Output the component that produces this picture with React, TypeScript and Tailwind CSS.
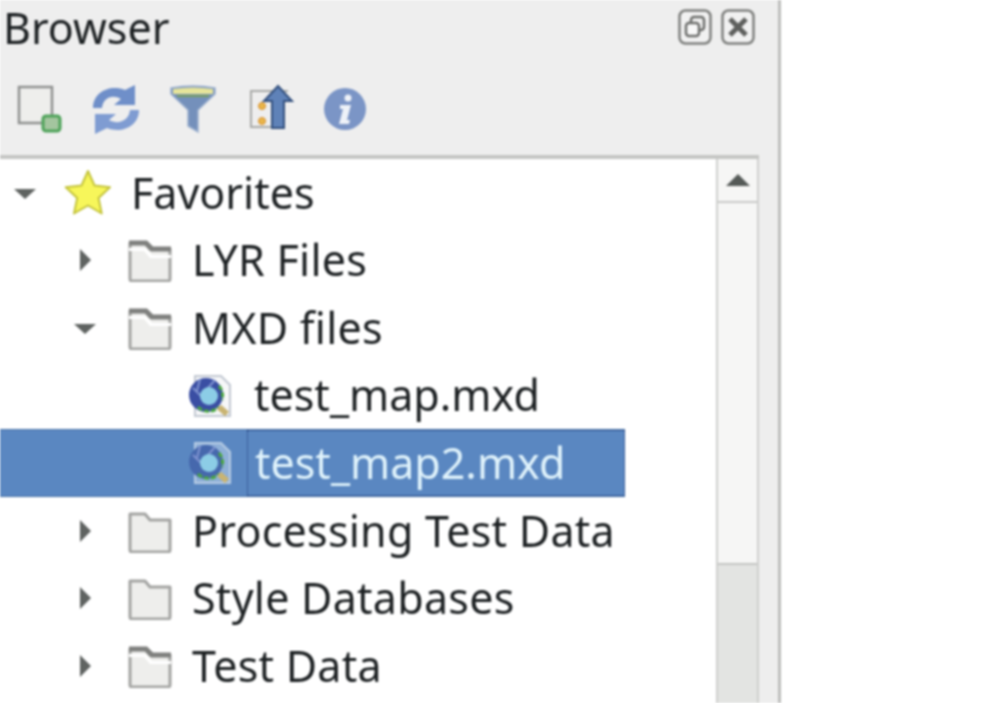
import type { ReactNode } from "react";

type Row = {
  label: string;
  level: number;
  arrow?: "open" | "closed";
  icon: "star" | "folder" | "linked" | "mxd";
  selected?: boolean;
};

const rows: Row[] = [
  { label: "Favorites", level: 0, arrow: "open", icon: "star" },
  { label: "LYR Files", level: 1, arrow: "closed", icon: "linked" },
  { label: "MXD files", level: 1, arrow: "open", icon: "linked" },
  { label: "test_map.mxd", level: 2, icon: "mxd" },
  { label: "test_map2.mxd", level: 2, icon: "mxd", selected: true },
  { label: "Processing Test Data", level: 1, arrow: "closed", icon: "folder" },
  { label: "Style Databases", level: 1, arrow: "closed", icon: "folder" },
  { label: "Test Data", level: 1, arrow: "closed", icon: "linked" },
];

function Arrow({ dir }: { dir?: "open" | "closed" }) {
  if (!dir) return <span className="w-[24px] shrink-0" />;
  return (
    <svg viewBox="0 0 24 24" className="h-[24px] w-[24px] shrink-0">
      {dir === "open" ? (
        <path d="M1 8h22L12 18z" fill="#5f6361" />
      ) : (
        <path d="M7 1l11 11L7 23z" fill="#5f6361" />
      )}
    </svg>
  );
}

function FolderIcon({ linked }: { linked: boolean }) {
  return (
    <svg viewBox="0 0 44 44" className="h-[44px] w-[44px] shrink-0">
      <path
        d="M2 5h15l5 6h20v30a2 2 0 0 1-2 2H4a2 2 0 0 1-2-2z"
        fill="#eeeeec"
        stroke="#a3a4a2"
        strokeWidth="3"
        strokeLinejoin="round"
      />
      {linked && <path d="M1 10h17l6 7h19v3H22l-6-7H1z" fill="#fff" />}
      {linked && <path d="M1 5h17l6 6h19" fill="none" stroke="#7f807e" strokeWidth="5" />}
    </svg>
  );
}

function MxdIcon({ selected }: { selected?: boolean }) {
  return (
    <svg viewBox="0 0 44 44" className="h-[44px] w-[44px] shrink-0">
      <path
        d="M7 2h26l9 9v31H7z"
        fill={selected ? "#8fb0d8" : "#f6f7f8"}
        stroke={selected ? "#b6cbe4" : "#c2c8d2"}
        strokeWidth="2"
      />
      <circle cx="18" cy="21" r="17" fill={selected ? "#4668ad" : "#3a4ea3"} />
      <path d="M5 14l9 9M12 5l-3 12M27 6l-8 9" stroke="#7f93d0" strokeWidth="2" />
      <circle cx="21" cy="22" r="9" fill="#8ccde6" />
      <path
        d="M10 33a15 15 0 0 0 21 0M31 12a15 15 0 0 1 3 14"
        fill="none"
        stroke="#4aa83f"
        strokeWidth="3"
        strokeDasharray="5 2"
      />
      <path d="M31 33l8 7" stroke="#c9b472" strokeWidth="6" />
    </svg>
  );
}

function StarIcon() {
  return (
    <svg viewBox="0 0 50 50" className="h-[50px] w-[50px] shrink-0">
      <path
        d="M25 3l6.500 14.500 15.500 1.800-11.500 10.600 3.200 15.600L25 37.500 11 45.500l3.200-15.600L2.700 19.300l15.800-1.800z"
        fill="#f7f65a"
        stroke="#c4c43c"
        strokeWidth="2"
        strokeLinejoin="round"
      />
    </svg>
  );
}

function TreeRow({ row }: { row: Row }) {
  let icon: ReactNode = <FolderIcon linked={false} />;
  if (row.icon === "star") icon = <StarIcon />;
  if (row.icon === "linked") icon = <FolderIcon linked />;
  if (row.icon === "mxd") icon = <MxdIcon selected={row.selected} />;

  const indent = row.level === 0 ? "pl-[13px]" : row.level === 1 ? "pl-[73px]" : "pl-[133px]";
  const iconBox = row.level === 0 ? "ml-[24px] w-[54px]" : "ml-[30px] w-[46px]";
  const gap =
    row.level === 0
      ? "ml-[16px]"
      : row.level === 1
        ? "ml-[19px] tracking-[0.25px]"
        : "ml-[21px]";
  const inner = (
    <>
      <Arrow dir={row.arrow} />
      <span className={`flex justify-center ${iconBox}`}>{icon}</span>
    </>
  );

  if (row.selected) {
    return (
      <div className={`flex h-[67.6px] w-[625px] items-center border-y border-[#4a74a8] bg-[#5a87c1] ${indent}`}>
        {inner}
        <span className="ml-[14px] flex h-full flex-1 items-center border border-dotted border-[#1f3a78] pl-[7px] text-[#dff2fb]">
          {row.label}
        </span>
      </div>
    );
  }
  return (
    <div className={`flex h-[67.6px] items-center text-[#1d2123] ${indent}`}>
      {inner}
      <span className={gap}>{row.label}</span>
    </div>
  );
}

function Toolbar() {
  return (
    <div className="flex h-[98px] items-center pl-[16px] pt-[6px]">
      <svg viewBox="0 0 48 50" className="h-[50px] w-[48px]">
        <rect x="3" y="3" width="33" height="36" fill="#eeeeec" stroke="#8f9190" strokeWidth="2.500" />
        <rect x="27" y="32" width="17" height="15" rx="3" fill="#a4c59f" stroke="#4fa35a" strokeWidth="3" />
      </svg>
      <svg viewBox="0 0 48 50" className="ml-[28px] h-[50px] w-[48px]">
        <path d="M1 24C1 8 18 0 33 6l10-5v20H22l7-6C20 10 11 14 10 24z" fill="#6f8fc9" />
        <path d="M47 26c0 16-17 24-32 18L3 50V30h21l-7 6c9 5 20 1 21-10z" fill="#7f9cd2" />
      </svg>
      <svg viewBox="0 0 48 50" className="ml-[29px] h-[50px] w-[48px]">
        <path d="M2 4q22-4 44 0v6L29 26v22l-10-6V26L2 10z" fill="#7490bb" stroke="#9db1cf" strokeWidth="1.500" />
        <path d="M4 5q20-3 40 0v5H4z" fill="#e6e49a" />
        <path d="M8 12h32" stroke="#7aa05e" strokeWidth="2" />
      </svg>
      <svg viewBox="0 0 48 50" className="ml-[29px] h-[50px] w-[48px]">
        <path d="M4 7h38M5 7v36h22" fill="none" stroke="#a8a9a7" strokeWidth="2" />
        <circle cx="16" cy="22" r="3.500" fill="#e9b64a" stroke="#d98f2f" />
        <circle cx="16" cy="37" r="3.500" fill="#e9b64a" stroke="#d98f2f" />
        <path d="M32 2l14 15h-8v27H26V17h-8z" fill="#5f82b8" stroke="#33507e" strokeWidth="2" />
      </svg>
      <svg viewBox="0 0 48 50" className="ml-[27px] h-[50px] w-[48px]">
        <circle cx="24" cy="25" r="21" fill="#7b95c6" />
        <circle cx="27" cy="14" r="3.500" fill="#eef2f8" />
        <path d="M19 21h11l-4 15h3l-1 4H18l4-15h-3z" fill="#eef2f8" />
      </svg>
    </div>
  );
}

function Scrollbar() {
  return (
    <div className="flex w-[43px] shrink-0 flex-col border-x-2 border-[#cfd0ce] bg-[#f6f6f5]">
      <div className="flex h-[44px] items-center justify-center border-b-2 border-[#c9cac8]">
        <svg viewBox="0 0 26 14" className="h-[14px] w-[26px]">
          <path d="M13 1l12 12H1z" fill="#555a57" />
        </svg>
      </div>
      <div className="h-[360px]" />
      <div className="flex-1 border-t-2 border-[#c4c5c3] bg-[#e3e4e2]" />
    </div>
  );
}

export default function App() {
  return (
    <div className="h-[703px] w-[1000px] overflow-hidden bg-white font-['Noto_Sans',sans-serif] blur-[0.9px]">
      <div className="flex h-full w-[781px] flex-col border-r-[3px] border-[#bdbebc] bg-[#eeeeee]">
        <div className="flex h-[57px] items-start justify-between pr-[23px]">
          <span className="pl-[3px] text-[43px] leading-[56px] text-[#1d2123]">Browser</span>
          <div className="mt-[9px] flex gap-[9px]">
            <svg viewBox="0 0 34 36" className="h-[36px] w-[34px]">
              <rect x="1.500" y="1.500" width="31" height="33" rx="6" fill="#f1f1f1" stroke="#7f807e" strokeWidth="2.500" />
              <rect x="13" y="8" width="13" height="13" rx="3" fill="none" stroke="#6e6f6d" strokeWidth="2.500" />
              <rect x="8" y="14" width="13" height="13" rx="3" fill="#f8f8f8" stroke="#6e6f6d" strokeWidth="2.500" />
            </svg>
            <svg viewBox="0 0 34 36" className="h-[36px] w-[34px]">
              <rect x="1.500" y="1.500" width="31" height="33" rx="6" fill="#f1f1f1" stroke="#7f807e" strokeWidth="2.500" />
              <path d="M9 10l16 16M25 10L9 26" stroke="#5e5f5d" strokeWidth="5" />
            </svg>
          </div>
        </div>
        <div>
          <Toolbar />
        </div>
        <div className="mr-[19px] flex min-h-0 flex-1 border-t-[4px] border-[#c5c6c4] bg-white">
          <div className="min-w-0 flex-1 text-[43px]">
            {rows.map((row) => (
              <TreeRow key={row.label} row={row} />
            ))}
          </div>
          <Scrollbar />
        </div>
      </div>
    </div>
  );
}
